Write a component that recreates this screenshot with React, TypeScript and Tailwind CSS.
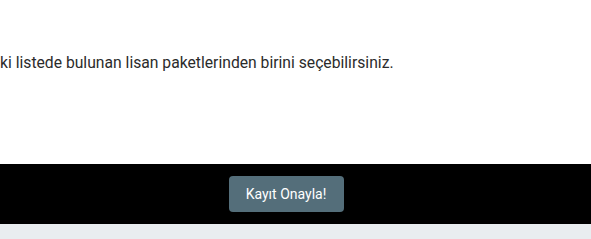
export default function App() {
  return (
    <div className="w-[591px] h-[239px] overflow-hidden bg-white flex flex-col" style={{ fontFamily: "Roboto, 'Liberation Sans', sans-serif" }}>
      <div className="h-[164px] bg-white pt-[51px]">
        <p className="text-[15.7px] leading-[24px] text-[#2b2b2b] whitespace-nowrap">ki listede bulunan lisan paketlerinden birini seçebilirsiniz.</p>
      </div>
      <div className="h-[60px] bg-black flex items-center justify-center pr-[19px]">
        <button className="w-[115px] h-[36px] rounded-[4px] bg-[#546e7a] text-white text-[14px] font-normal">Kayıt Onayla!</button>
      </div>
      <div className="flex-1 bg-[#e9edf0]"></div>
    </div>
  );
}
